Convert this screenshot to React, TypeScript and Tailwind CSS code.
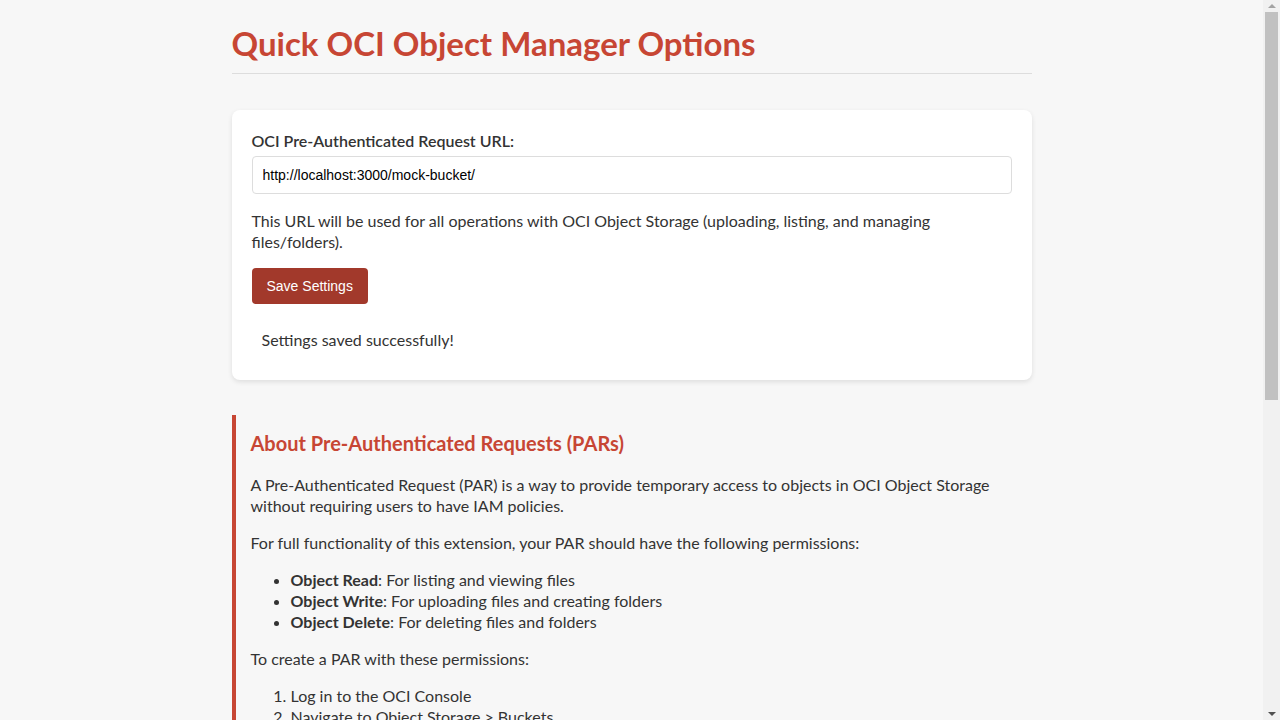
import { useState } from "react";

const bodyFont = { fontFamily: "Lato, 'Noto Sans', sans-serif" };
const inputFont = { fontFamily: "'Liberation Sans', Arial, sans-serif" };

function Scrollbar() {
  return (
    <div className="w-[17px] h-full shrink-0 bg-[#f1f1f1] flex flex-col items-center">
      <div className="h-3 flex items-center justify-center">
        <svg width="8" height="4" viewBox="0 0 8 4">
          <path d="M0 4 L4 0 L8 4 Z" fill="#a3a3a3" />
        </svg>
      </div>
      <div className="w-[13px] h-[388px] bg-[#c1c1c1]" />
      <div className="flex-1" />
      <div className="h-3 flex items-center justify-center">
        <svg width="8" height="4" viewBox="0 0 8 4">
          <path d="M0 0 L8 0 L4 4 Z" fill="#505050" />
        </svg>
      </div>
    </div>
  );
}

export default function App() {
  const [url, setUrl] = useState("http://localhost:3000/mock-bucket/");
  const [status, setStatus] = useState("Settings saved successfully!");

  return (
    <div className="h-screen flex bg-[#f7f7f7] text-[#333]" style={bodyFont}>
      <div className="flex-1 h-full overflow-y-auto [scrollbar-width:none] px-5 pt-5 pb-5">
        <div className="max-w-[800px] mx-auto">
          <h1 className="text-[33px] leading-[43px] font-bold text-[#c74634] border-b border-[#dddddd] pt-[2px] pb-[8px]">
            Quick OCI Object Manager Options
          </h1>

          {/* Settings card */}
          <div className="mt-9 bg-white rounded-lg p-5 shadow-[0_2px_5px_rgba(0,0,0,0.1)]">
            <label htmlFor="par-url" className="block text-base leading-[21px] font-semibold mb-[5px]">
              OCI Pre-Authenticated Request URL:
            </label>
            <input
              id="par-url"
              type="text"
              value={url}
              onChange={(e) => setUrl(e.target.value)}
              className="block w-full h-[38px] px-[10px] border border-[#dddddd] rounded text-[14px] text-black outline-none"
              style={inputFont}
            />
            <p className="my-4 text-base leading-[21px]">
              This URL will be used for all operations with OCI Object Storage (uploading, listing, and managing
              files/folders).
            </p>
            <button
              onClick={() => setStatus("Settings saved successfully!")}
              className="h-9 px-[15px] bg-[#a2392b] text-white text-[14px] rounded cursor-pointer"
              style={inputFont}
            >
              Save Settings
            </button>
            <div className="mt-[15px] p-[10px] text-base leading-[21px]">{status}</div>
          </div>

          {/* About PARs */}
          <div className="mt-[35px] border-l-4 border-[#c74634] px-[15px] py-[15px] text-base leading-[21px]">
            <h3 className="text-[20px] leading-[26px] font-bold text-[#c74634] mb-[18px]">
              About Pre-Authenticated Requests (PARs)
            </h3>
            <p className="mb-4">
              A Pre-Authenticated Request (PAR) is a way to provide temporary access to objects in OCI Object Storage
              without requiring users to have IAM policies.
            </p>
            <p className="mb-4">For full functionality of this extension, your PAR should have the following permissions:</p>
            <ul className="list-disc pl-10 mb-4">
              <li><strong>Object Read</strong>: For listing and viewing files</li>
              <li><strong>Object Write</strong>: For uploading files and creating folders</li>
              <li><strong>Object Delete</strong>: For deleting files and folders</li>
            </ul>
            <p className="mb-4">To create a PAR with these permissions:</p>
            <ol className="list-decimal pl-10 mb-4">
              <li>Log in to the OCI Console</li>
              <li>Navigate to Object Storage &gt; Buckets</li>
              <li>Select your bucket</li>
              <li>Click on &quot;Pre-Authenticated Requests&quot; under Resources</li>
              <li>Click &quot;Create Pre-Authenticated Request&quot;</li>
              <li>Select &quot;Bucket&quot; as the target</li>
              <li>Select &quot;Permit object reads and writes&quot; and enable object listing</li>
              <li>Set an appropriate expiration date</li>
              <li>Click &quot;Create Pre-Authenticated Request&quot; and copy the generated URL</li>
            </ol>
            <p>
              <strong>Note:</strong> The PAR URL is only shown once when it is created. Make sure to copy it and paste
              it into the field above before closing the dialog.
            </p>
          </div>

          {/* Security */}
          <div className="mt-[30px] border-l-4 border-[#c74634] px-[15px] py-[15px] text-base leading-[21px]">
            <h3 className="text-[20px] leading-[26px] font-bold text-[#c74634] mb-[18px]">Security Considerations</h3>
            <p className="mb-4">
              Anyone with the PAR URL can access the objects it covers until it expires, so treat it like a password
              and do not share it publicly.
            </p>
            <ul className="list-disc pl-10 mb-4">
              <li>Use the shortest expiration period that fits your workflow</li>
              <li>Limit the PAR to a single bucket or prefix where possible</li>
              <li>Revoke the PAR from the OCI Console if it is ever exposed</li>
            </ul>
            <p>
              The URL is stored only in your browser&apos;s extension storage and is never sent anywhere other than
              OCI Object Storage.
            </p>
          </div>
        </div>
      </div>
      <Scrollbar />
    </div>
  );
}
